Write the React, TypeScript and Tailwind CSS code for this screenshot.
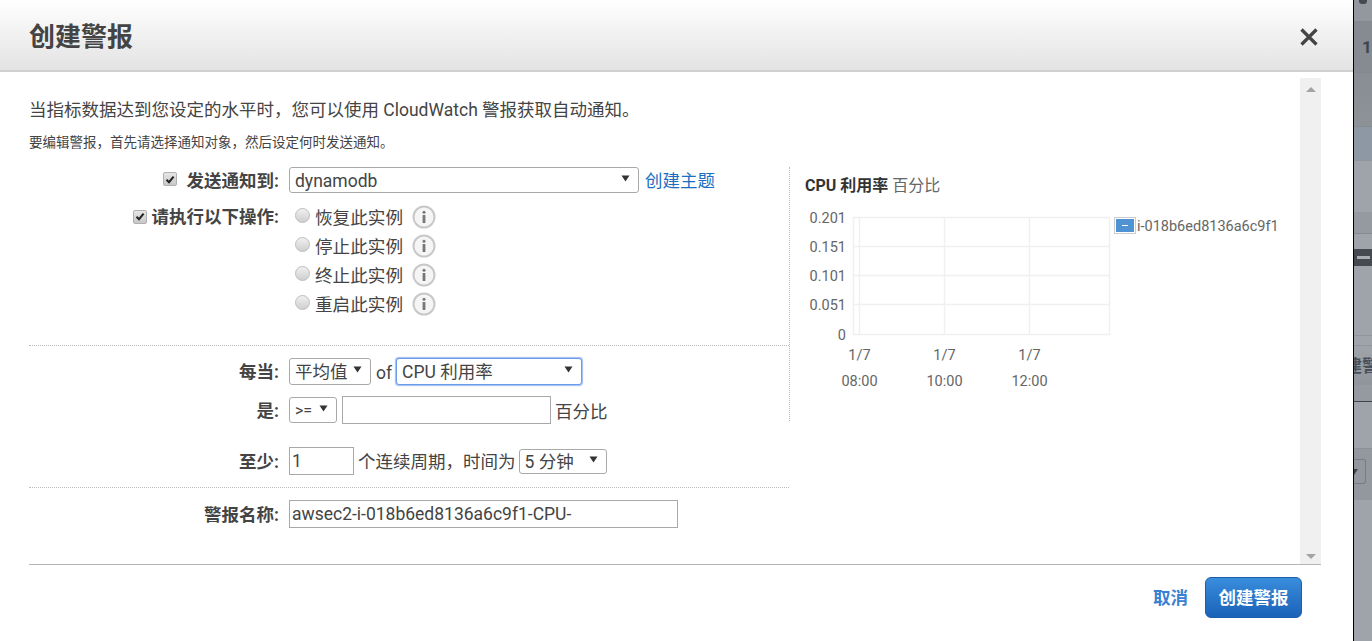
import { useState } from "react";

const actions = ["恢复此实例", "停止此实例", "终止此实例", "重启此实例"];
const yTicks = [
  { label: "0.201", y: 12.5 },
  { label: "0.151", y: 41.5 },
  { label: "0.101", y: 70.5 },
  { label: "0.051", y: 99.5 },
  { label: "0", y: 129.5 },
];
const xTicks = [
  { x: 69.5, time: "08:00" },
  { x: 154.5, time: "10:00" },
  { x: 239.5, time: "12:00" },
];

function Caret() {
  return (
    <svg width="9" height="7" viewBox="0 0 9 7" className="shrink-0">
      <path d="M0.5 0.5h8L4.5 6.5z" fill="#333" />
    </svg>
  );
}

function Select({ className, value, focus }: { className: string; value: string; focus?: boolean }) {
  return (
    <div
      className={
        "flex items-center justify-between rounded-[3px] border pl-[5px] pr-[8px] bg-white " +
        (focus ? "border-[#6a9cec] shadow-[0_0_1px_1px_#9dbdf2] " : "border-[#a9a9a9] ") +
        className
      }
    >
      <span className="mt-[2px] whitespace-nowrap">{value}</span>
      <span className="mb-[3px]">
        <Caret />
      </span>
    </div>
  );
}

function Checkbox() {
  return (
    <span className="flex h-[14px] w-[14px] items-center justify-center rounded-[2px] border border-[#b0b0b0] bg-gradient-to-b from-[#e6e6e6] to-[#c8c8c8]">
      <svg width="10" height="9" viewBox="0 0 10 9">
        <path d="M1.5 4.8 4 7.2 8.6 1.6" fill="none" stroke="#222" strokeWidth="2" />
      </svg>
    </span>
  );
}

function InfoIcon() {
  return (
    <svg width="24" height="24" viewBox="0 0 24 24" className="shrink-0">
      <circle cx="12" cy="12" r="10.5" fill="#f5f5f5" stroke="#c8c8c8" strokeWidth="2" />
      <circle cx="12" cy="7.2" r="1.5" fill="#777" />
      <rect x="10.6" y="10" width="2.8" height="8" rx="0.6" fill="#777" />
    </svg>
  );
}

function Row({ label, className, children }: { label: string; className: string; children: React.ReactNode }) {
  return (
    <div className={"flex items-center " + className}>
      <div className="mt-[2px] w-[250px] text-right font-bold text-[#444]">{label}:</div>
      <div className="ml-[10px] flex items-center">{children}</div>
    </div>
  );
}

function Chart() {
  return (
    <div className="mt-[8px] flex">
      <svg width="324" height="195" className="shrink-0">
        <g stroke="#f0f0f0" strokeWidth="1.5" fill="none">
          <rect x="63.5" y="12.5" width="256" height="117" />
          {yTicks.slice(1, 4).map((t) => (
            <line key={t.label} x1="63.5" x2="319.5" y1={t.y} y2={t.y} />
          ))}
          {xTicks.map((t) => (
            <line key={t.time} x1={t.x} x2={t.x} y1="12.5" y2="129.5" />
          ))}
        </g>
        <g fill="#666" fontSize="14.5" fontFamily="Roboto, sans-serif">
          {yTicks.map((t) => (
            <text key={t.label} x="56" y={t.y + 5} textAnchor="end">
              {t.label}
            </text>
          ))}
          {xTicks.map((t) => (
            <g key={t.time} textAnchor="middle">
              <text x={t.x} y="155">
                1/7
              </text>
              <text x={t.x} y="181">
                {t.time}
              </text>
            </g>
          ))}
        </g>
      </svg>
      <div className="mt-[12px] flex h-[17px] items-center text-[14.5px] text-[#666]">
        <span className="flex h-[17px] w-[22px] items-center justify-center border border-[#ccc] p-[1px]">
          <span className="flex h-full w-full items-center justify-center bg-[#4f93d3]">
            <span className="h-[1px] w-[6px] bg-white" />
          </span>
        </span>
        <span className="ml-[1px] mt-[2px] whitespace-nowrap">i-018b6ed8136a6c9f1</span>
      </div>
    </div>
  );
}

function Backdrop() {
  return (
    <div className="flex flex-1 flex-col overflow-hidden bg-[#9ea4aa]">
      <div className="h-[22px] border-b border-[#83898e] bg-[#92989d]">
        <div className="ml-[5px] h-[4px] w-[8px] rounded-b-[3px] bg-[#444a50]" />
      </div>
      <div className="flex h-[51px] items-center border-b border-[#83898e] bg-[#858b90] pl-[8px] text-[17px] font-bold text-[#3d4650]">
        1
      </div>
      <div className="h-[53px] bg-gradient-to-b from-[#888e93] to-[#8d9297]" />
      <div className="h-[34px] border-t border-[#868c91] bg-[#8e98a4]" />
      <div className="h-[52px] border-t border-[#8f959a] bg-[#9ea4aa]" />
      <div className="h-[21px] bg-[#949a9f]" />
      <div className="h-[16px] border-t border-[#858b90]" />
      <div className="flex h-[17px] items-center justify-center bg-[#454a50]">
        <span className="h-[3px] w-[13px] bg-[#a9adb1]" />
      </div>
      <div className="h-[69px]" />
      <div className="h-[10px] border-t border-[#8f959a]" />
      <div className="flex h-[40px] items-center overflow-hidden border-t border-[#8f959a] bg-gradient-to-b from-[#9ea4aa] to-[#8f959a]">
        <span className="ml-[-9px] whitespace-nowrap text-[17px] font-bold text-[#4a505a]">建警</span>
      </div>
      <div className="h-[16px] bg-[#949a9f]" />
      <div className="h-[47px] border-t border-[#3f444a]" />
      <div className="h-[52px] border-t border-[#8b9196] bg-[#92989d] pt-[10px]">
        <div className="flex h-[25px] w-[12px] items-center overflow-hidden rounded-r-[3px] border border-l-0 border-[#777d82]">
          <span className="ml-[-4px] h-0 w-0 border-x-[4px] border-t-[6px] border-x-transparent border-t-[#444]" />
        </div>
      </div>
    </div>
  );
}

export default function App() {
  const [threshold, setThreshold] = useState("");
  const [periods, setPeriods] = useState("1");
  const [name, setName] = useState("awsec2-i-018b6ed8136a6c9f1-CPU-");

  return (
    <div className="flex h-[641px] w-[1372px] overflow-hidden bg-white font-[Roboto,'Noto_Sans_CJK_SC',sans-serif] text-[17.5px] leading-[24px] text-[#444]">
      <div className="flex w-[1354px] shrink-0 flex-col border-r border-black">
        {/* header */}
        <div className="flex h-[72px] items-center justify-between border-b-2 border-[#d0d0d0] bg-gradient-to-b from-white to-[#e3e3e3] pl-[29px] pr-[34px] pt-[4px]">
          <h1 className="text-[26px] font-bold text-[#444]">创建警报</h1>
          <svg width="20" height="20" viewBox="0 0 20 20">
            <path d="M2.5 2.5l15 15M17.5 2.5l-15 15" stroke="#444" strokeWidth="3.2" />
          </svg>
        </div>

        {/* body */}
        <div className="ml-[29px] mr-[32px] mt-[6px] flex h-[487px] border-b border-[#b5b5b5]">
          <div className="min-w-0 flex-1">
            <p className="mt-[20px] whitespace-nowrap">当指标数据达到您设定的水平时，您可以使用 CloudWatch 警报获取自动通知。</p>
            <p className="mt-[11px] text-[13.5px] leading-[18px]">要编辑警报，首先请选择通知对象，然后设定何时发送通知。</p>

            <div className="mt-[16px] flex">
              <div className="w-[760px] shrink-0">
                <div className="flex h-[26px] items-center">
                  <div className="flex w-[250px] items-center justify-end font-bold">
                    <span className="mb-[2px] mr-[10px]">
                      <Checkbox />
                    </span>
                    <span className="mt-[2px]">发送通知到:</span>
                  </div>
                  <Select className="ml-[10px] h-[26px] w-[350px]" value="dynamodb" />
                  <a className="ml-[6px] mt-[2px] text-[#1b6ec2]" href="#">
                    创建主题
                  </a>
                </div>

                <div className="mt-[9px] flex border-b border-dotted border-[#bbb] pb-[27px]">
                  <div className="flex h-[29px] w-[250px] items-center justify-end font-bold">
                    <span className="mr-[5px]">
                      <Checkbox />
                    </span>
                    请执行以下操作:
                  </div>
                  <div className="ml-[16px]">
                    {actions.map((a) => (
                      <div key={a} className="flex h-[29px] items-center">
                        <span className="mb-[3px] h-[15px] w-[15px] rounded-full border border-[#bdbdbd] bg-gradient-to-b from-[#f0f0f0] to-[#cfcfcf]" />
                        <span className="ml-[5px] mt-[2px] w-[88px] whitespace-nowrap text-[17.6px]">{a}</span>
                        <span className="ml-[9px]">
                          <InfoIcon />
                        </span>
                      </div>
                    ))}
                  </div>
                </div>

                <Row label="每当" className="mt-[11px] h-[28px]">
                  <Select className="h-[27px] w-[82px]" value="平均值" />
                  <span className="ml-[5px] mr-[4px] mt-[3px]">of</span>
                  <Select focus className="h-[27px] w-[186px]" value="CPU 利用率" />
                </Row>

                <Row label="是" className="mt-[11px] h-[28px]">
                  <Select className="h-[26px] w-[48px] text-[16px]" value=">=" />
                  <input
                    value={threshold}
                    onChange={(e) => setThreshold(e.target.value)}
                    className="ml-[5px] h-[28px] w-[209px] border border-[#a9a9a9] px-[3px] outline-none"
                  />
                  <span className="ml-[4px] mt-[4px] whitespace-nowrap">百分比</span>
                </Row>
              </div>

              <div className="h-[254px] flex-1 border-l border-dotted border-[#bbb]">
                <div className="mt-[7px] pl-[15px] text-[16px]">
                  <span className="font-bold text-[#333]">CPU 利用率</span> <span className="text-[#666]">百分比</span>
                </div>
                <div className="mt-[-1px]">
                  <Chart />
                </div>
              </div>
            </div>

            <Row label="至少" className="mt-[23px] h-[28px] w-[760px]">
              <input
                value={periods}
                onChange={(e) => setPeriods(e.target.value)}
                className="h-[28px] w-[65px] border border-[#a9a9a9] px-[2px] outline-none"
              />
              <span className="ml-[4px] mt-[2px] whitespace-nowrap">个连续周期，时间为</span>
              <Select className="ml-[3px] h-[25px] w-[88px]" value="5 分钟" />
            </Row>

            <div className="mt-[12px] w-[760px] border-b border-dotted border-[#bbb]" />

            <Row label="警报名称" className="mt-[12px] h-[28px] w-[760px]">
              <input
                value={name}
                onChange={(e) => setName(e.target.value)}
                className="h-[28px] w-[389px] border border-[#a9a9a9] px-[2px] outline-none"
              />
            </Row>
          </div>

          {/* scrollbar */}
          <div className="flex w-[21px] shrink-0 flex-col items-center justify-between bg-[#f0f0f0] pb-[5px] pt-[9px]">
            <span className="h-0 w-0 border-x-[5px] border-b-[5px] border-x-transparent border-b-[#a3a3a3]" />
            <span className="h-0 w-0 border-x-[5px] border-t-[5px] border-x-transparent border-t-[#a3a3a3]" />
          </div>
        </div>

        {/* footer */}
        <div className="flex items-center justify-end pr-[51px] pt-[12px]">
          <a href="#" className="mr-[17px] font-bold text-[#3a80d2]">
            取消
          </a>
          <button className="h-[41px] w-[97px] rounded-[6px] border border-[#1c5fa8] bg-gradient-to-b from-[#3a8ddd] to-[#1a62b8] font-bold text-white">
            创建警报
          </button>
        </div>
      </div>
      <Backdrop />
    </div>
  );
}
